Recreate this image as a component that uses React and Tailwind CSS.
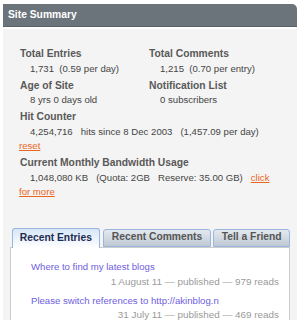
export default function App() {
  const label = "font-bold text-[10.3px] text-[#595959]";
  const link = "text-[#e8671e] underline";
  return (
    <div className="w-[301px] h-[320px] bg-white overflow-hidden font-['Liberation_Sans',sans-serif] text-[9.6px] leading-[14.5px]">
      <div className="ml-[3px] pt-[4px] w-[294px]">
        <div className="h-[23px] bg-[#6c747b] rounded-tr-[5px] border-b border-[#5a6167] flex items-center pl-[5px] text-white font-bold text-[10.3px]">
          Site Summary
        </div>
        <div className="mt-[2px] bg-[#f4f4f4] h-[300px] pt-[18px]">
          <div className="pl-[17px] text-[#454545]">
            <div className="grid grid-cols-[129px_1fr]">
              <div className="mb-[2.5px]">
                <div className={label}>Total Entries</div>
                <div className="pl-[10px] whitespace-pre">1,731  (0.59 per day)</div>
              </div>
              <div className="mb-[2.5px]">
                <div className={label}>Total Comments</div>
                <div className="pl-[11px] whitespace-pre">1,215  (0.70 per entry)</div>
              </div>
              <div className="mb-[2.5px]">
                <div className={label}>Age of Site</div>
                <div className="pl-[10px]">8 yrs 0 days old</div>
              </div>
              <div className="mb-[2.5px]">
                <div className={label}>Notification List</div>
                <div className="pl-[11px]">0 subscribers</div>
              </div>
            </div>
            <div className="mb-[2.5px]">
              <div className={label}>Hit Counter</div>
              <div className="pl-[10px] whitespace-pre">4,254,716   hits since 8 Dec 2003   (1,457.09 per day)</div>
              <a className={link + " -ml-px"}>reset</a>
            </div>
            <div>
              <div className={label}>Current Monthly Bandwidth Usage</div>
              <div className="indent-[11px] -ml-px whitespace-pre">
                1,048,080 KB   (Quota: 2GB   Reserve: 35.00 GB)   <a className={link}>click</a>
                <br />
                <a className={link}>for more</a>
              </div>
            </div>
          </div>

          <div className="mt-[28px] ml-[7px] w-[280px]">
            <div className="flex items-end pl-[2px] h-[19px]">
              <div className="w-[88px] h-[20px] -mb-px relative z-10 bg-gradient-to-b from-[#d6e6f7] to-white border border-b-0 border-[#9bb6dd] rounded-t-[3px] flex items-center justify-center font-bold text-[10.3px] text-[#1d2b4f]">
                Recent Entries
              </div>
              <div className="ml-[3px] w-[109px] h-[18px] bg-gradient-to-b from-[#e4e9ef] to-[#bfc9d4] border border-[#9bb6dd] rounded-t-[3px] flex items-center justify-center font-bold text-[10.3px] text-[#555555]">
                Recent Comments
              </div>
              <div className="ml-[2px] w-[77px] h-[18px] bg-gradient-to-b from-[#e4e9ef] to-[#bfc9d4] border border-[#9bb6dd] rounded-t-[3px] flex items-center justify-center font-bold text-[10.3px] text-[#555555]">
                Tell a Friend
              </div>
            </div>
            <div className="bg-white border-l border-r border-t border-[#cccccc] h-[80px] pt-[12px] pl-[20px] pr-[10px] leading-[14px]">
              <a className="block text-[#6e5ee0]">Where to find my latest blogs</a>
              <div className="text-right text-[#9a9a9a] text-[9.9px] mt-px">1 August 11 — published — 979 reads</div>
              <a className="block text-[#6e5ee0] mt-[5px]">Please switch references to http://akinblog.n</a>
              <div className="text-right text-[#9a9a9a] text-[9.9px]">31 July 11 — published — 469 reads</div>
            </div>
          </div>
        </div>
      </div>
    </div>
  );
}
